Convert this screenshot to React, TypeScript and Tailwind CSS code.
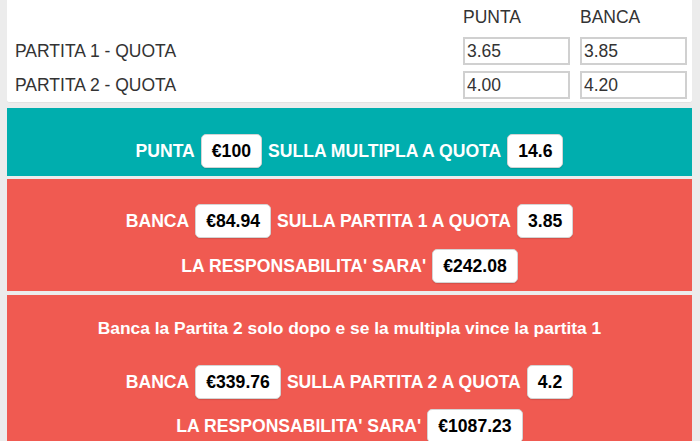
import React from "react";

const font = { fontFamily: '"Liberation Sans", Arial, sans-serif' };

const Pill = ({ value }: { value: string }) => {
  return (
    <span className="flex h-[34px] items-center rounded-[5px] border border-[#d4d4d4] bg-white px-[10px] text-black shadow-[0_1px_1px_rgba(0,0,0,0.12)]">
      {value}
    </span>
  );
};

const Line = ({ children }: { children: React.ReactNode }) => {
  return (
    <div className="flex items-center justify-center gap-[6px] text-[17.6px] font-bold leading-5 text-white">
      {children}
    </div>
  );
};

const QuotaInput = ({ value }: { value: string }) => {
  return (
    <input
      readOnly
      value={value}
      className="h-[28px] w-[107px] border-2 border-[#d0d0d0] bg-white px-[2px] text-[17.5px] text-[#333] outline-none"
    />
  );
};

const rows = [
  { label: "PARTITA 1 - QUOTA", punta: "3.65", banca: "3.85" },
  { label: "PARTITA 2 - QUOTA", punta: "4.00", banca: "4.20" },
];

export default function App() {
  return (
    <div className="min-h-screen w-[700px] bg-[#ececec] px-[7px] pr-[8px]" style={font}>
      <div className="rounded-b-[3px] border-b border-[#e2e2e2] bg-white pb-[3px] pl-[8px] pr-[5px] text-[17.5px] text-[#333]">
        <div className="flex h-[37px] items-start pt-[7px] leading-5">
          <span className="grow"></span>
          <span className="w-[117px]">PUNTA</span>
          <span className="w-[107px]">BANCA</span>
        </div>
        <div className="flex flex-col gap-[6px]">
          {rows.map((row, i) => (
            <div key={`row-${i}`} className="flex items-center">
              <span className="grow">{row.label}</span>
              <QuotaInput value={row.punta} />
              <span className="w-[10px]"></span>
              <QuotaInput value={row.banca} />
            </div>
          ))}
        </div>
      </div>

      <div className="mt-[5px] bg-[#00aeae] pb-[8px] pt-[26px]">
        <Line>
          <span>PUNTA</span>
          <Pill value="€100" />
          <span>SULLA MULTIPLA A QUOTA</span>
          <Pill value="14.6" />
        </Line>
      </div>

      <div className="mt-[3px] flex flex-col gap-[11px] bg-[#f05a51] pb-[8px] pt-[25px]">
        <Line>
          <span>BANCA</span>
          <Pill value="€84.94" />
          <span>SULLA PARTITA 1 A QUOTA</span>
          <Pill value="3.85" />
        </Line>
        <Line>
          <span>LA RESPONSABILITA' SARA'</span>
          <Pill value="€242.08" />
        </Line>
      </div>

      <div className="mt-[4px] bg-[#f05a51] pb-[20px] pt-[23px]">
        <p className="text-center text-[17.4px] font-bold leading-5 text-white">
          Banca la Partita 2 solo dopo e se la multipla vince la partita 1
        </p>
        <div className="mt-[27px] flex flex-col gap-[10px]">
          <Line>
            <span>BANCA</span>
            <Pill value="€339.76" />
            <span>SULLA PARTITA 2 A QUOTA</span>
            <Pill value="4.2" />
          </Line>
          <Line>
            <span>LA RESPONSABILITA' SARA'</span>
            <Pill value="€1087.23" />
          </Line>
        </div>
      </div>
    </div>
  );
}
